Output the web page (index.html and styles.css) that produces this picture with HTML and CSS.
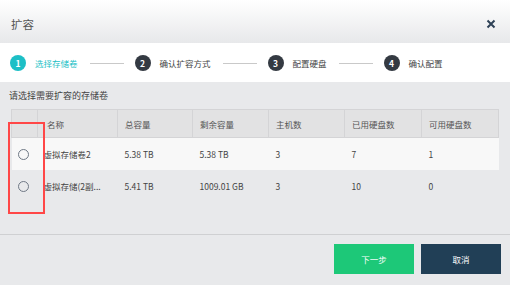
FILE: index.html
```html
<!DOCTYPE html>
<html lang="zh">
<head>
    <meta charset="UTF-8">
    <title>扩容</title>
    <link rel="stylesheet" href="styles.css">
</head>
<body>
    <div class="dialog">
        <div class="header">
            <span class="title">扩容</span>
            <svg class="close" width="10" height="10" viewBox="0 0 10 10">
                <path d="M1.5 1.5 L8.5 8.5 M8.5 1.5 L1.5 8.5" stroke="#2f4257" stroke-width="2"/>
            </svg>
        </div>
        <div class="steps">
            <span class="num active">1</span>
            <span class="label active">选择存储卷</span>
            <span class="line"></span>
            <span class="num">2</span>
            <span class="label">确认扩容方式</span>
            <span class="line"></span>
            <span class="num">3</span>
            <span class="label">配置硬盘</span>
            <span class="line"></span>
            <span class="num">4</span>
            <span class="label">确认配置</span>
        </div>
        <div class="content">
            <p class="hint">请选择需要扩容的存储卷</p>
            <table class="grid">
                <colgroup>
                    <col style="width:26px"><col style="width:80px"><col style="width:75px"><col style="width:76px"><col style="width:76px"><col style="width:77px"><col style="width:77px">
                </colgroup>
                <thead>
                    <tr>
                        <th></th>
                        <th class="name">名称</th>
                        <th>总容量</th>
                        <th>剩余容量</th>
                        <th>主机数</th>
                        <th>已用硬盘数</th>
                        <th>可用硬盘数</th>
                    </tr>
                </thead>
                <tbody>
                    <tr class="odd">
                        <td class="pick"><span class="radio"></span></td>
                        <td class="name">虚拟存储卷2</td>
                        <td>5.38 TB</td>
                        <td>5.38 TB</td>
                        <td>3</td>
                        <td>7</td>
                        <td>1</td>
                    </tr>
                    <tr>
                        <td class="pick"><span class="radio"></span></td>
                        <td class="name">虚拟存储(2副...</td>
                        <td>5.41 TB</td>
                        <td>1009.01 GB</td>
                        <td>3</td>
                        <td>10</td>
                        <td>0</td>
                    </tr>
                </tbody>
            </table>
            <div class="mark"></div>
        </div>
        <div class="footer">
            <button class="btn next">下一步</button>
            <button class="btn cancel">取消</button>
        </div>
    </div>
</body>
</html>
```

FILE: styles.css
```css
body {
    margin: 0;
    font-family: "Noto Sans CJK SC", "Noto Sans", sans-serif;
    background: #e8e9eb;
}
.dialog {
    width: 510px;
    height: 285px;
    display: flex;
    flex-direction: column;
}
.header {
    height: 43px;
    box-sizing: border-box;
    padding: 5px 14px 0 11px;
    display: flex;
    align-items: center;
    justify-content: space-between;
    background: linear-gradient(#ffffff, #e7e8ea);
}
.title {
    font-size: 11.5px;
    color: #555;
}
.steps {
    height: 39px;
    background: #fff;
    display: flex;
    align-items: center;
    padding-left: 10px;
    padding-top: 1px;
    box-sizing: border-box;
}
.num {
    width: 16px;
    height: 16px;
    border-radius: 50%;
    background: #343a42;
    color: #fff;
    font-size: 8.5px;
    font-weight: bold;
    display: flex;
    align-items: center;
    justify-content: center;
    margin-right: 9px;
}
.num.active {
    background: #1dbfc6;
}
.label {
    font-size: 8.5px;
    color: #444;
}
.label.active {
    color: #1dbfc6;
}
.line {
    width: 34px;
    height: 1px;
    background: #c9c9c9;
    margin: 0 11px 0 12px;
}
.content {
    height: 152px;
    position: relative;
    padding: 0 12px 0 11px;
    border-bottom: 1px solid #cfd0d2;
}
.hint {
    margin: 8px 0 7px -2px;
    font-size: 9px;
    line-height: 12px;
    color: #444;
}
.grid {
    border-collapse: collapse;
    table-layout: fixed;
    width: 487px;
    font-size: 8.5px;
    color: #444;
}
.grid th {
    height: 27px;
    padding: 0 7px;
    text-align: left;
    font-weight: normal;
    color: #555;
    background: #e2e2e3;
    border: 1px solid #d4d4d6;
}
.grid th.name {
    padding-left: 9px;
}
.grid td {
    height: 32px;
    padding: 0 7px;
    white-space: nowrap;
    overflow: hidden;
}
.grid td.name {
    padding-left: 6px;
}
.grid tr.odd td {
    background: #f8f8f8;
}
.grid td.pick {
    padding: 0 0 0 6px;
}
.radio {
    display: block;
    width: 9px;
    height: 9px;
    border: 1px solid #6f7885;
    border-radius: 50%;
}
.mark {
    position: absolute;
    left: 8px;
    top: 40px;
    width: 33px;
    height: 88px;
    border: 2px solid #ff4747;
}
.footer {
    display: flex;
    justify-content: flex-end;
    gap: 7px;
    padding: 9px 9px 0 0;
}
.btn {
    width: 80px;
    height: 30px;
    border: none;
    color: #fff;
    font-family: inherit;
    font-size: 8.5px;
}
.next {
    background: #1dc878;
}
.cancel {
    background: #213f56;
}
```
